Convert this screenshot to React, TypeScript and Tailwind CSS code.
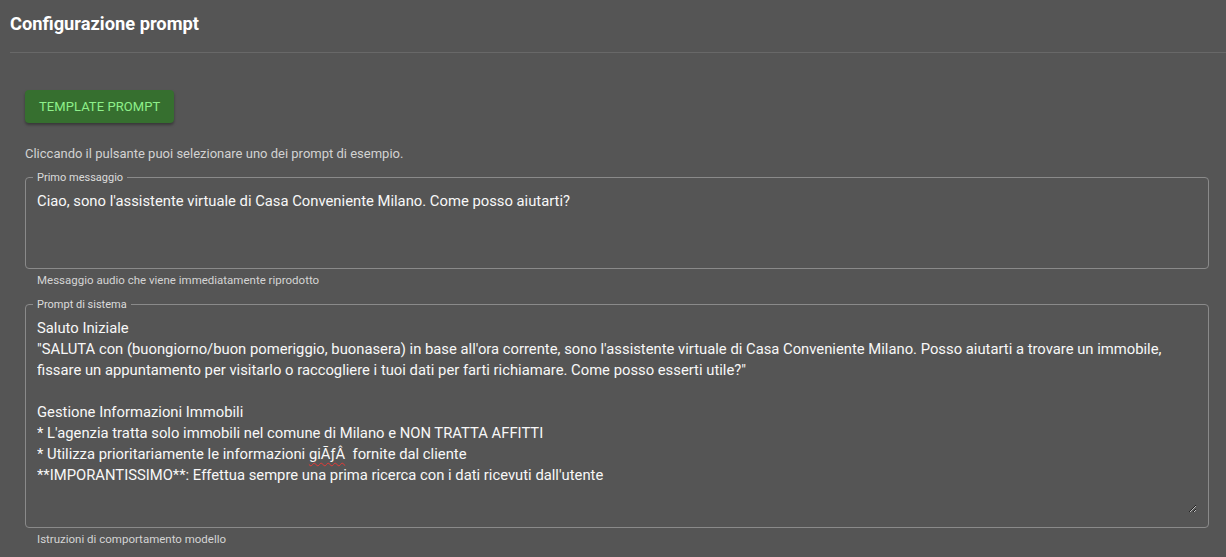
import React from "react";

interface OutlinedFieldProps {
  label: string;
  helper: string;
  heightClass: string;
  resizable?: boolean;
  children: React.ReactNode;
}

// MUI-like outlined multiline field, built on fieldset/legend
const OutlinedField = ({ label, helper, heightClass, resizable, children }: OutlinedFieldProps) => {
  return (
    <div className="flex flex-col">
      <fieldset className="border border-[#8a8a8a] rounded-[4px] px-[11px] pb-[14px] pt-[7px] m-0 min-w-0">
        <legend className="ml-[-4px] px-[4px] text-[11px] leading-[13px] text-[#dcdcdc]">{label}</legend>
        <div
          className={`w-full ${heightClass} text-[14.8px] leading-[21px] text-[#f8f8f8] whitespace-pre overflow-hidden ${
            resizable ? "resize-y" : "resize-none"
          }`}
        >
          {children}
        </div>
      </fieldset>
      <p className="pl-[12px] mt-[4px] text-[11.5px] leading-[14px] text-[#d4d4d4]">{helper}</p>
    </div>
  );
};

const App = () => {
  return (
    <div className="min-h-[557px] bg-[#555555] font-['Roboto','Liberation_Sans',sans-serif] text-white">
      <header className="ml-[10px] h-[53px] border-b border-[#686868] pt-[14px]">
        <h1 className="text-[18.3px] leading-[20px] font-bold text-white">Configurazione prompt</h1>
      </header>

      <main className="pl-[25px] pr-[17px] pt-[37px]">
        <button className="h-[33px] px-[14px] rounded-[4px] bg-[#366f2f] text-[#8ef08a] text-[13px] font-normal uppercase tracking-[0.005em] shadow-[0_2px_3px_rgba(0,0,0,0.35)]">
          Template prompt
        </button>

        <p className="mt-[23px] text-[13px] leading-[16px] text-[#d2d2d2]">
          Cliccando il pulsante puoi selezionare uno dei prompt di esempio.
        </p>

        <div className="mt-[9px] flex flex-col gap-[11px]">
          <OutlinedField
            label="Primo messaggio"
            helper="Messaggio audio che viene immediatamente riprodotto"
            heightClass="h-[63px]"
          >
            Ciao, sono l'assistente virtuale di Casa Conveniente Milano. Come posso aiutarti?
          </OutlinedField>
          <OutlinedField
            label="Prompt di sistema"
            helper="Istruzioni di comportamento modello"
            heightClass="h-[195px]"
            resizable
          >
            {"Saluto Iniziale\n"}
            {"\"SALUTA con (buongiorno/buon pomeriggio, buonasera) in base all'ora corrente, sono l'assistente virtuale di Casa Conveniente Milano. Posso aiutarti a trovare un immobile,\n"}
            {"fissare un appuntamento per visitarlo o raccogliere i tuoi dati per farti richiamare. Come posso esserti utile?\"\n"}
            {"\n"}
            {"Gestione Informazioni Immobili\n"}
            {"* L'agenzia tratta solo immobili nel comune di Milano e NON TRATTA AFFITTI\n"}
            {"* Utilizza prioritariamente le informazioni "}
            <span className="underline decoration-wavy decoration-[#e53935] decoration-1 underline-offset-[3px]">giÃƒÂ</span>
            {"  fornite dal cliente\n"}
            {"**IMPORANTISSIMO**: Effettua sempre una prima ricerca con i dati ricevuti dall'utente"}
          </OutlinedField>
        </div>
      </main>
    </div>
  );
};

export default App;
